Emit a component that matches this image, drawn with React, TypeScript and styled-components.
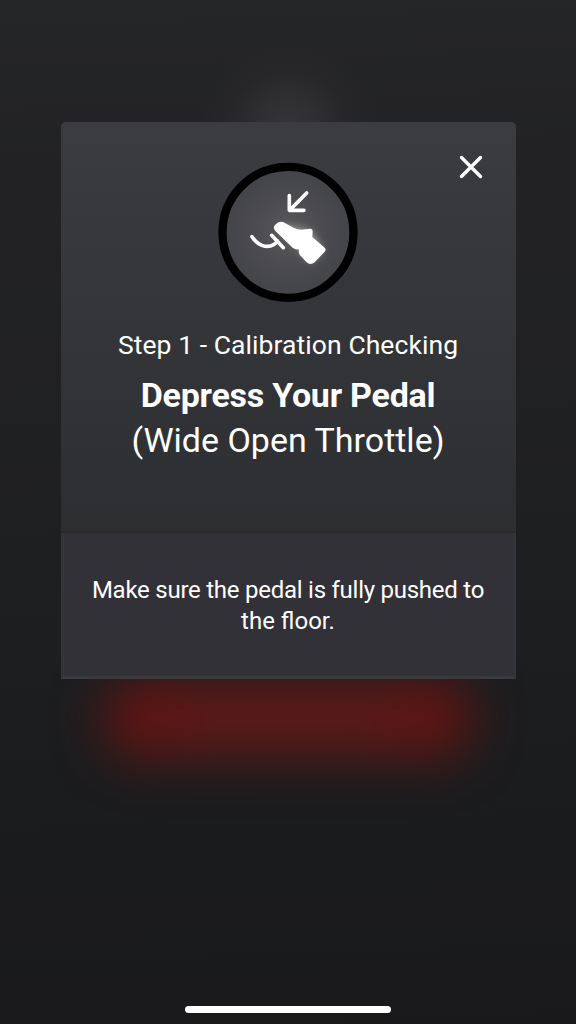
import React from "react";
import styled, { createGlobalStyle } from "styled-components";

const GlobalStyle = createGlobalStyle`
  * { box-sizing: border-box; }
  html, body { margin: 0; background: #1b1c1e; }
  body { font-family: Roboto, "Liberation Sans", sans-serif; color: #fff; }
`;

const Screen = styled.main`
  position: relative;
  display: flex;
  flex-direction: column;
  justify-content: space-between;
  align-items: center;
  width: 576px;
  height: 1024px;
  padding: 122px 0 11px;
  overflow: hidden;
  background: linear-gradient(178deg, #252628 0%, #222224 18%, #1e1f21 55%, #1b1c1e 78%, #19191b 100%);
`;

const TopGlow = styled.div`
  position: absolute;
  left: 198px;
  top: 38px;
  width: 180px;
  height: 180px;
  background: radial-gradient(circle, #353437 0%, rgba(50, 49, 52, 0.8) 24%, rgba(42, 41, 44, 0.5) 46%, rgba(36, 36, 38, 0) 70%);
`;

const RedGlow = styled.div`
  position: absolute;
  left: 105px;
  top: 678px;
  width: 366px;
  height: 80px;
  border-radius: 36px;
  background: linear-gradient(90deg, #681110, #5b1917 25%, #5b1917 75%, #681110);
  filter: blur(25px);
`;

const Dialog = styled.section`
  position: relative;
  width: 455px;
  height: 557px;
  display: flex;
  flex-direction: column;
  border-radius: 5px 5px 0 0;
  overflow: hidden;
  background: linear-gradient(180deg, #3b3c40 0, #303134 58%, #2d2e30 408px);
`;

const Header = styled.div`
  height: 411px;
  padding-top: 40px;
  display: flex;
  flex-direction: column;
  align-items: center;
  border-bottom: 2px solid #2a2a2d;
`;

const CloseButton = styled.button`
  position: absolute;
  right: 31px;
  top: 31px;
  width: 28px;
  height: 28px;
  padding: 0;
  border: 0;
  background: none;
  svg { display: block; }
`;

const PedalBadge = styled.svg`
  display: block;
  width: 140px;
  height: 140px;
  overflow: visible;
`;

const Titles = styled.div`
  padding-top: 25px;
  text-align: center;
  white-space: nowrap;
`;

const Step = styled.p`
  margin: 0 0 10px;
  font-size: 26.5px;
  line-height: 36px;
  letter-spacing: 0.07px;
`;

const Title = styled.h1`
  margin: 0;
  font-size: 34px;
  line-height: 45px;
  font-weight: 700;
  letter-spacing: -0.25px;
`;

const Subtitle = styled.p`
  margin: 0;
  font-size: 34px;
  line-height: 45px;
`;

const Footer = styled.div`
  flex: 1;
  padding-top: 42px;
  border: solid #353539;
  border-width: 0 3px 3px;
  border-bottom-color: #3b3a3c;
  background: #323138;
`;

const Hint = styled.p<{ $spacing?: number }>`
  margin: 0;
  font-size: 24px;
  line-height: 31px;
  letter-spacing: ${(p) => p.$spacing ?? 0}px;
  text-align: center;
  white-space: nowrap;
`;

const HomeIndicator = styled.div`
  width: 206px;
  height: 7px;
  border-radius: 4px;
  background: #fff;
`;

export default function App() {
  return (
    <Screen>
      <GlobalStyle />
      <TopGlow />
      <RedGlow />
      <Dialog>
        <Header>
          <PedalBadge viewBox="30 30 420 420" fill="none" strokeLinecap="round" strokeLinejoin="round">
            <defs>
              <radialGradient id="dial">
                <stop offset="0" stopColor="#59595c" />
                <stop offset="0.55" stopColor="#4b4b4f" />
                <stop offset="1" stopColor="#434448" />
              </radialGradient>
              <filter id="glow" x="-40%" y="-40%" width="180%" height="180%">
                <feGaussianBlur stdDeviation="13" />
              </filter>
            </defs>
            <circle cx="240" cy="241" r="196.5" fill="url(#dial)" stroke="#000" strokeWidth="25" />
            <path d="M212 220L305 237L345 294L307 330L275 290Z" fill="#fff" opacity="0.5" filter="url(#glow)" />
            <path d="M296 123L245 175M244 131V175H288" stroke="#fff" strokeWidth="11" />
            <path d="M132 254C148 279 174 291 197 278Q206 273 208 266M191 250L226 287" stroke="#fff" strokeWidth="11" />
            <path d="M204 216Q217 204 231 213L258 228Q273 235 292 232L308 230Q314 230 314 238L313 255L350 287Q356 293 350 299L320 331Q307 341 295 330L275 308Q271 302 273 292Q263 294 254 287L202 237Q192 226 204 216Z" fill="#fff" />
          </PedalBadge>
          <Titles>
            <Step>Step 1 - Calibration Checking</Step>
            <Title>Depress Your Pedal</Title>
            <Subtitle>(Wide Open Throttle)</Subtitle>
          </Titles>
        </Header>
        <Footer>
          <Hint $spacing={-0.25}>Make sure the pedal is fully pushed to</Hint>
          <Hint>the floor.</Hint>
        </Footer>
        <CloseButton aria-label="Close">
          <svg width="28" height="28" viewBox="0 0 28 28" stroke="#fff" strokeWidth="3.4" strokeLinecap="round">
            <path d="M4.5 4.5L23.5 23.5M23.5 4.5L4.5 23.5" />
          </svg>
        </CloseButton>
      </Dialog>
      <HomeIndicator />
    </Screen>
  );
}
